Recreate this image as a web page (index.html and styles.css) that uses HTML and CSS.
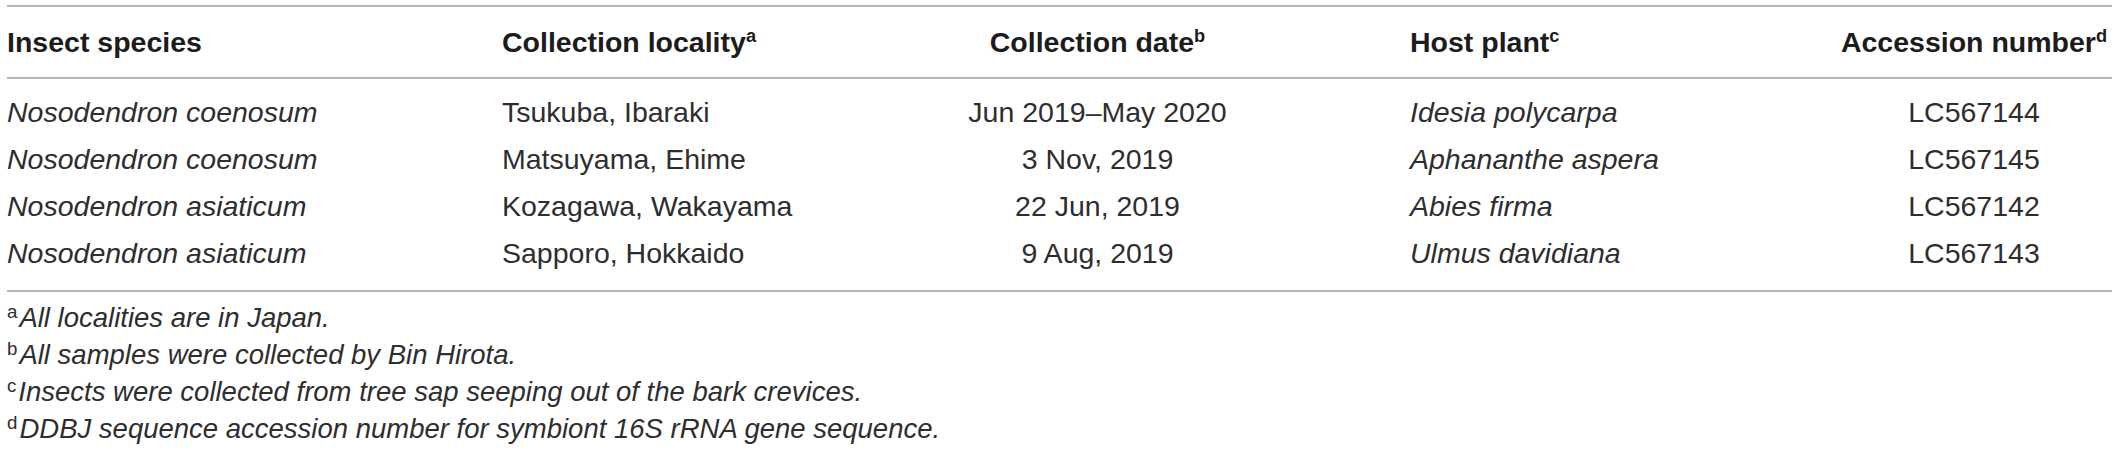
FILE: index.html
```html
<!DOCTYPE html>
<html lang="en">
<head>
<meta charset="utf-8">
<title>Table</title>
<link rel="stylesheet" href="styles.css">
</head>
<body>
<div class="wrap">
  <table class="data">
    <colgroup>
      <col class="c1"><col class="c2"><col class="c3"><col class="c4"><col class="c5">
    </colgroup>
    <thead>
      <tr>
        <th class="left">Insect species</th>
        <th class="left">Collection locality<sup>a</sup></th>
        <th class="center">Collection date<sup>b</sup></th>
        <th class="left">Host plant<sup>c</sup></th>
        <th class="center">Accession number<sup>d</sup></th>
      </tr>
    </thead>
    <tbody>
      <tr>
        <td class="left"><i>Nosodendron coenosum</i></td>
        <td class="left">Tsukuba, Ibaraki</td>
        <td class="center">Jun 2019–May 2020</td>
        <td class="left"><i>Idesia polycarpa</i></td>
        <td class="center">LC567144</td>
      </tr>
      <tr>
        <td class="left"><i>Nosodendron coenosum</i></td>
        <td class="left">Matsuyama, Ehime</td>
        <td class="center">3 Nov, 2019</td>
        <td class="left"><i>Aphananthe aspera</i></td>
        <td class="center">LC567145</td>
      </tr>
      <tr>
        <td class="left"><i>Nosodendron asiaticum</i></td>
        <td class="left">Kozagawa, Wakayama</td>
        <td class="center">22 Jun, 2019</td>
        <td class="left"><i>Abies firma</i></td>
        <td class="center">LC567142</td>
      </tr>
      <tr>
        <td class="left"><i>Nosodendron asiaticum</i></td>
        <td class="left">Sapporo, Hokkaido</td>
        <td class="center">9 Aug, 2019</td>
        <td class="left"><i>Ulmus davidiana</i></td>
        <td class="center">LC567143</td>
      </tr>
    </tbody>
  </table>
  <div class="notes">
    <p><sup>a</sup><i>All localities are in Japan.</i></p>
    <p><sup>b</sup><i>All samples were collected by Bin Hirota.</i></p>
    <p><sup>c</sup><i>Insects were collected from tree sap seeping out of the bark crevices.</i></p>
    <p><sup>d</sup><i>DDBJ sequence accession number for symbiont 16S rRNA gene sequence.</i></p>
  </div>
</div>
</body>
</html>
```
FILE: styles.css
```css
html, body {
  margin: 0;
  padding: 0;
  background: #ffffff;
}

body {
  font-family: "Liberation Sans", Arial, Helvetica, sans-serif;
  color: #2e2e2e;
}

.wrap {
  padding: 5px 6px 0 7px;
}

.data {
  width: 2105px;
  table-layout: fixed;
  border-collapse: collapse;
  border-top: 2px solid #b5b5b5;
  border-bottom: 2px solid #b5b5b5;
  font-size: 28.5px;
  line-height: 34px;
}

.c1 { width: 495px; }
.c2 { width: 283px; }
.c3 { width: 625px; }
.c4 { width: 426px; }
.c5 { width: 276px; }

.data th,
.data td {
  padding: 0;
  white-space: nowrap;
}

.data th {
  font-weight: bold;
  color: #1c1c1c;
  padding-top: 18px;
  padding-bottom: 18px;
  border-bottom: 2px solid #b5b5b5;
}

.data td {
  font-weight: normal;
  padding-top: 6px;
  padding-bottom: 7px;
}

.data tbody tr:first-child td {
  padding-top: 16px;
}

.data tbody tr:last-child td {
  padding-bottom: 20px;
}

.left { text-align: left; }
.center { text-align: center; }

.data sup {
  font-size: 0.64em;
  line-height: 0;
  vertical-align: 0.55em;
}

.notes {
  padding-top: 7px;
  font-size: 27.5px;
  line-height: 37px;
}

.notes p {
  margin: 0;
  white-space: nowrap;
}

.notes sup {
  font-size: 0.68em;
  line-height: 0;
  vertical-align: 0.5em;
  margin-right: 2px;
}
```
